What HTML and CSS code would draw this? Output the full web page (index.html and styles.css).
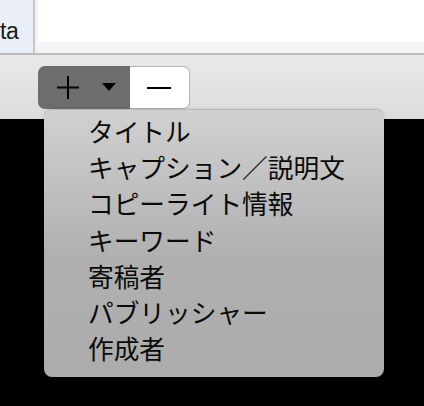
FILE: index.html
```html
<!DOCTYPE html>
<html>
<head>
<meta charset="utf-8">
<link rel="stylesheet" href="styles.css">
</head>
<body>
<div class="table">
  <div class="cell"><span class="celltext">ta</span></div>
  <div class="divider"></div>
  <div class="content">
    <div class="white"></div>
    <div class="strip"></div>
  </div>
</div>
<div class="rule"></div>
<div class="toolbar">
  <div class="segmented">
    <div class="seg add">
      <svg class="plus" width="22" height="23" viewBox="0 0 22 23"><path d="M11 0V23M0 11.5H22" stroke="#000" stroke-width="2"/></svg>
      <svg class="tri" width="14" height="8" viewBox="0 0 14 8"><path d="M0 0H14L7 8Z" fill="#000"/></svg>
    </div>
    <div class="seg remove">
      <svg width="24" height="2" viewBox="0 0 24 2"><path d="M0 1H24" stroke="#000" stroke-width="2"/></svg>
    </div>
  </div>
</div>
<div class="dark"></div>
<div class="menu">
  <div class="item">タイトル</div>
  <div class="item">キャプション／説明文</div>
  <div class="item">コピーライト情報</div>
  <div class="item">キーワード</div>
  <div class="item">寄稿者</div>
  <div class="item">パブリッシャー</div>
  <div class="item">作成者</div>
</div>
</body>
</html>
```
FILE: styles.css
```css
html, body {
  margin: 0;
  padding: 0;
  background: #000;
}
body {
  width: 424px;
  height: 406px;
  overflow: hidden;
  position: relative;
  font-family: "Liberation Sans", Arial, sans-serif;
}
.table {
  display: flex;
  height: 53px;
  background: #fff;
}
.cell {
  width: 33px;
  background: #e9eef7;
  display: flex;
  align-items: flex-end;
  padding-bottom: 12px;
  box-sizing: border-box;
}
.celltext {
  font-size: 23px;
  line-height: 20px;
  color: #1a1a1a;
  white-space: nowrap;
  letter-spacing: -0.5px;
}
.divider {
  width: 2px;
  background: #c7c7c7;
  border-right: 3px solid #f4f4f4;
}
.content {
  flex: 1;
  display: flex;
  flex-direction: column;
}
.white {
  flex: 1;
  background: #fff;
}
.strip {
  height: 11px;
  background: #f4f4f4;
}
.rule {
  height: 2px;
  background: #bdbdbd;
}
.toolbar {
  height: 64px;
  box-sizing: border-box;
  padding: 11px 0 0 38px;
  background: linear-gradient(#e9e9e9, #dcdcdc);
}
.segmented {
  display: flex;
  height: 43px;
  width: 152px;
}
.seg {
  display: flex;
  align-items: center;
  box-sizing: border-box;
}
.add {
  width: 92px;
  background: #6d6d6d;
  border-radius: 7px 0 0 7px;
  padding-left: 19px;
}
.tri {
  margin-left: 23px;
  margin-top: -1px;
}
.remove {
  width: 60px;
  background: #fff;
  border: 1px solid #b3b3b3;
  border-left: none;
  border-radius: 0 7px 7px 0;
  justify-content: center;
  padding-right: 2px;
}
.dark {
  height: 287px;
  background: #000;
}
.menu {
  position: absolute;
  left: 44px;
  top: 109px;
  width: 340px;
  height: 268px;
  box-sizing: border-box;
  padding: 3px 0 0 44px;
  border-radius: 8px;
  border-top: 1px solid #b9b9b9;
  background: linear-gradient(#d1d1d1, #b0b0b0 55%, #acacac);
  box-shadow: 0 0 3px rgba(0,0,0,0.15);
  font-family: "Noto Sans CJK JP", sans-serif;
}
.item {
  font-size: 25.7px;
  line-height: 36.2px;
  height: 36.2px;
  color: #0a0a0a;
  white-space: nowrap;
}
```
